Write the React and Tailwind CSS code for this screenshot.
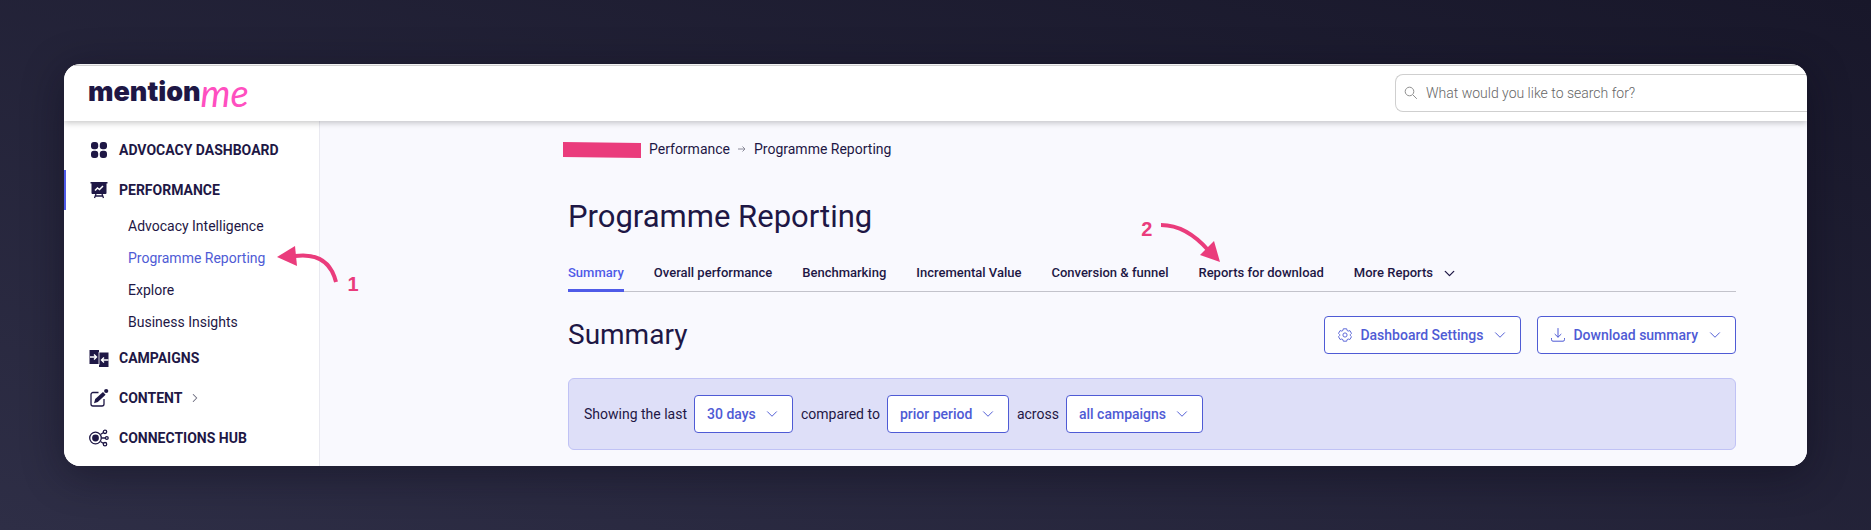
import { ChevronDown, ChevronRight } from 'lucide-react';

function DashboardIcon() {
  return (
    <svg width="20" height="20" viewBox="0 0 20 20" fill="currentColor" aria-hidden="true">
      <rect x="2" y="2" width="7.200" height="7.200" rx="2.900" />
      <rect x="10.800" y="2" width="7.200" height="7.200" rx="2.900" />
      <rect x="2" y="10.800" width="7.200" height="7.200" rx="2.900" />
      <rect x="10.800" y="10.800" width="7.200" height="7.200" rx="2.900" />
    </svg>
  );
}

function PerformanceIcon() {
  return (
    <svg width="20" height="20" viewBox="0 0 20 20" fill="none" stroke="currentColor" aria-hidden="true">
      <path d="M1.500 2h17v1.600h-1V13a1 1 0 0 1-1 1h-13a1 1 0 0 1-1-1V3.600h-1z" fill="currentColor" stroke="none" />
      <path d="M6 10.500l2.500-2.500 2 1.500L14 6" stroke="#fff" strokeWidth="1.500" />
      <path d="M7 14l-1.500 4M13 14l1.500 4M6.500 16h7" strokeWidth="1.300" />
    </svg>
  );
}

function CampaignsIcon() {
  return (
    <svg width="20" height="20" viewBox="0 0 20 20" fill="none" aria-hidden="true">
      <path d="M.500 2H10v2.500h9.500V19H10v-3H.500z" fill="currentColor" />
      <path d="M10 4v13" stroke="#fff" strokeWidth=".8" />
      <path d="M1 9h6.500M5 6.500L7.500 9 5 11.500M19.500 12H12.500M15 9.500L12.500 12l2.500 2.500" stroke="#fff" strokeWidth="1.400" />
    </svg>
  );
}

function ContentIcon() {
  return (
    <svg width="20" height="20" viewBox="0 0 20 20" fill="none" stroke="currentColor" aria-hidden="true">
      <path d="M9.500 4.500H4a2 2 0 0 0-2 2V16a2 2 0 0 0 2 2h9a2 2 0 0 0 2-2v-5" strokeWidth="1.300" />
      <path d="M5 15.200l1.200-4.200 7.800-7 2.600 2.700-7.800 7.300z" fill="currentColor" stroke="none" />
      <circle cx="17.200" cy="3" r="2.100" fill="currentColor" stroke="none" />
    </svg>
  );
}

function ConnectionsIcon() {
  return (
    <svg width="20" height="20" viewBox="0 0 20 20" fill="none" stroke="currentColor" strokeWidth="1.300" aria-hidden="true">
      <circle cx="6.500" cy="10" r="5.800" />
      <circle cx="6.500" cy="10" r="3.400" fill="currentColor" stroke="none" />
      <path d="M11.500 6.500l3-2M12.500 10h3.500M11.500 13.500l3 2" />
      <circle cx="16" cy="3.800" r="1.700" />
      <circle cx="17.800" cy="10" r="1.400" />
      <circle cx="16" cy="16.200" r="1.700" />
    </svg>
  );
}

function GearIcon() {
  return (
    <svg width="14" height="14" viewBox="0 0 14 14" fill="none" stroke="currentColor" strokeWidth=".9" strokeLinejoin="round" aria-hidden="true">
      <path d="M5.300.800h3.400l.4 1.700 1.100.6 1.700-.5 1.600 2.800-1.200 1.200v.9l1.200 1.200-1.600 2.800-1.700-.5-1.100.6-.4 1.600H5.300l-.4-1.600-1.100-.6-1.700.5L.500 8.700l1.200-1.200v-.9L.500 5.400l1.600-2.800 1.700.5 1.100-.6z" />
      <circle cx="7" cy="7" r="2.100" />
    </svg>
  );
}

function DownloadIcon() {
  return (
    <svg width="14" height="14" viewBox="0 0 14 14" fill="none" stroke="currentColor" strokeWidth="1" strokeLinecap="round" strokeLinejoin="round" aria-hidden="true">
      <path d="M7 .5v8.500M4 6.300L7 9.200l3-2.900M.5 10.500v1.200a1.500 1.500 0 0 0 1.500 1.500h10a1.500 1.500 0 0 0 1.500-1.500v-1.200" />
    </svg>
  );
}

function SearchIcon() {
  return (
    <svg width="14" height="14" viewBox="0 0 14 14" fill="none" stroke="#8f8f8f" className="shrink-0" aria-hidden="true">
      <circle cx="5.500" cy="5.500" r="4.300" />
      <path d="M8.800 8.800l4 4" />
    </svg>
  );
}

const subLinks = ['Advocacy Intelligence', 'Programme Reporting', 'Explore', 'Business Insights'];

const tabs = [
  'Summary',
  'Overall performance',
  'Benchmarking',
  'Incremental Value',
  'Conversion & funnel',
  'Reports for download',
];

function NavItem({ icon, label, active, arrow }) {
  return (
    <a
      href="#"
      className={`flex h-10 items-center gap-2.5 border-l-2 pl-[23px] text-sm font-bold uppercase ${active ? 'border-[#4f5be8]' : 'border-transparent'}`}
    >
      {icon}
      {label}
      {arrow && <ChevronRight size={14} strokeWidth={1.8} className="-ml-1 text-[#6b6b7d]" />}
    </a>
  );
}

// Pink step markers that sit over the page
function StepOne() {
  return (
    <div className="absolute -top-1.5 left-full ml-3 flex text-[#ea3c7c]">
      <svg width="62" height="42" viewBox="0 0 62 42" fill="none" aria-hidden="true">
        <path d="M18 14C41 11 54 20 59 40" stroke="currentColor" strokeWidth="4" />
        <path d="M0 15L18 4l2 20z" fill="currentColor" />
      </svg>
      <span className="ml-2 pt-8 font-['Liberation_Sans',sans-serif] text-xl leading-5 font-bold">1</span>
    </div>
  );
}

function StepTwo() {
  return (
    <div className="absolute right-full bottom-full -mr-6 -mb-1 flex text-[#ea3c7c]">
      <span className="mr-2 font-['Liberation_Sans',sans-serif] text-xl leading-5 font-bold">2</span>
      <svg width="62" height="44" viewBox="0 0 62 44" fill="none" aria-hidden="true">
        <path d="M1 6C20 6 36 17 49 32" stroke="currentColor" strokeWidth="4" />
        <path d="M60 43L40 36l14-14z" fill="currentColor" />
      </svg>
    </div>
  );
}

function FilterSelect({ id, label, value, width }) {
  return (
    <div className="flex items-center gap-[7px]">
      <label htmlFor={id}>{label}</label>
      <div className="relative">
        <select
          id={id}
          className={`h-[38px] appearance-none rounded-[4px] border border-[#4f5bd5] bg-white pl-3 font-medium text-[#4f5bd5] ${width}`}
        >
          <option>{value}</option>
        </select>
        <ChevronDown size={18} strokeWidth={1.3} className="pointer-events-none absolute top-2.5 right-3 text-[#4f5bd5]" />
      </div>
    </div>
  );
}

function ActionButton({ icon, children }) {
  return (
    <button className="flex h-[38px] items-center gap-2 rounded-[4px] border border-[#4f5bd5] bg-white pr-[11px] pl-[13px] text-sm font-medium text-[#4f5bd5]">
      {icon}
      {children}
      <ChevronDown size={18} strokeWidth={1.3} />
    </button>
  );
}

export default function App() {
  return (
    <div className="min-h-screen bg-linear-to-tr from-[#2e2e46] to-[#18172a] p-16 font-[Roboto,sans-serif] text-[#1e1745]">
      <div className="overflow-hidden rounded-2xl bg-white shadow-[0_8px_40px_rgba(10,8,25,0.45)]">
        <header className="relative mt-px flex h-14 items-start justify-between border-t border-[#d0d0d0] bg-white pt-2 pl-6 shadow-[0_2px_6px_rgba(0,0,0,0.22)]">
          <a href="#" className="flex h-9 items-center" aria-label="Mention Me">
            <span className="font-[Inter,sans-serif] text-[27px] leading-8 font-black">mention</span>
            <span className="font-[Lato,sans-serif] text-[38px] leading-8 text-[#ff4fc0] italic">me</span>
          </a>
          <label className="flex h-[38px] w-[412px] items-center gap-2 rounded-l-lg border border-r-0 border-[#cfcfcf] pl-2">
            <SearchIcon />
            <input
              type="search"
              placeholder="What would you like to search for?"
              className="w-full text-sm font-light outline-none placeholder:text-[#666]"
            />
          </label>
        </header>

        <div className="flex">
          <aside className="w-64 shrink-0 border-r border-[#e9e9f0] bg-white pt-[9px]">
            <nav>
              <NavItem icon={<DashboardIcon />} label="Advocacy Dashboard" />
              <NavItem icon={<PerformanceIcon />} label="Performance" active />
              <ul>
                {subLinks.map((link) => (
                  <li key={link} className="flex h-8 items-center pl-16 text-sm">
                    <a href="#" className={`relative ${link === 'Programme Reporting' ? 'text-[#4f5bd5]' : ''}`}>
                      {link}
                      {link === 'Programme Reporting' && <StepOne />}
                    </a>
                  </li>
                ))}
              </ul>
              <NavItem icon={<CampaignsIcon />} label="Campaigns" />
              <NavItem icon={<ContentIcon />} label="Content" arrow />
              <NavItem icon={<ConnectionsIcon />} label="Connections Hub" />
            </nav>
          </aside>

          <main className="min-w-0 flex-1 bg-[#f9f9fe] pt-[18px] pr-[71px] pb-4 pl-[248px]">
            <nav aria-label="Breadcrumb" className="-ml-[5px] flex h-5 items-center gap-2 text-sm">
              <svg width="78" height="16" viewBox="0 0 78 16" className="mt-0.5" aria-hidden="true">
                <path d="M0 0l78 1v15L0 15z" fill="#ea3c7c" />
              </svg>
              <a href="#">Performance</a>
              <svg width="8" height="8" viewBox="0 0 8 8" fill="none" stroke="#8a8a99" aria-hidden="true">
                <path d="M0 4h7M4.500 1.500L7 4 4.500 6.500" />
              </svg>
              <a href="#">Programme Reporting</a>
            </nav>

            <h1 className="mt-[38px] text-[31px] leading-10">Programme Reporting</h1>

            <div className="mt-[22px] flex gap-[30px] border-b border-[#c3c3cb] text-[13px] leading-5 font-medium">
              {tabs.map((tab) => (
                <a
                  key={tab}
                  href="#"
                  className={`relative -mb-px border-b-[3px] pt-1 pb-1.5 ${tab === 'Summary' ? 'border-[#4f5be8] text-[#4f5be8]' : 'border-transparent'}`}
                >
                  {tab}
                  {tab === 'Reports for download' && <StepTwo />}
                </a>
              ))}
              <button className="flex items-center gap-2 pb-1">
                More Reports
                <ChevronDown size={17} strokeWidth={1.8} />
              </button>
            </div>

            <div className="mt-6 flex items-center justify-between">
              <h2 className="text-[28px] leading-9">Summary</h2>
              <div className="flex gap-4">
                <ActionButton icon={<GearIcon />}>Dashboard Settings</ActionButton>
                <ActionButton icon={<DownloadIcon />}>Download summary</ActionButton>
              </div>
            </div>

            <form className="mt-6 flex h-18 items-center gap-2 rounded-md border border-[#c0c2f5] bg-[#dedff8] px-[15px] text-sm">
              <FilterSelect id="period" label="Showing the last" value="30 days" width="w-[99px]" />
              <FilterSelect id="comparison" label="compared to" value="prior period" width="w-[122px]" />
              <FilterSelect id="campaigns" label="across" value="all campaigns" width="w-[137px]" />
            </form>
          </main>
        </div>
      </div>
    </div>
  );
}
